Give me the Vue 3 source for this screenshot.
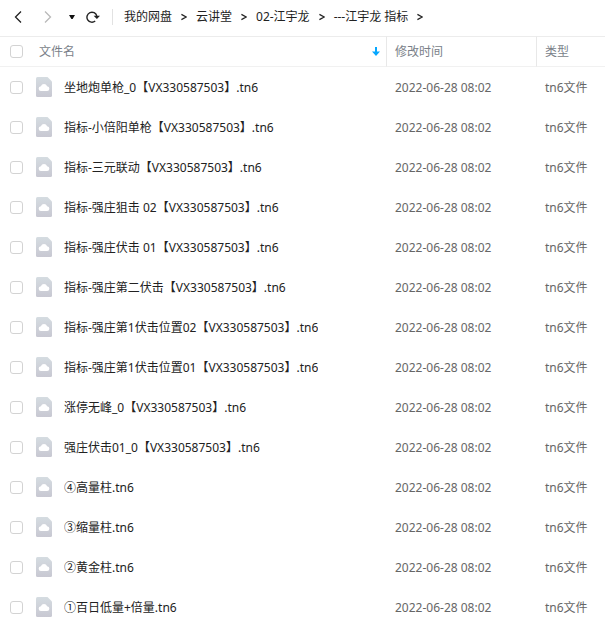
<script setup>
import { ref } from 'vue'

const crumbs = ['我的网盘', '云讲堂', '02-江宇龙', '---江宇龙 指标']

const names = [
  '坐地炮单枪_0【VX330587503】.tn6',
  '指标-小倍阳单枪【VX330587503】.tn6',
  '指标-三元联动【VX330587503】.tn6',
  '指标-强庄狙击 02【VX330587503】.tn6',
  '指标-强庄伏击 01【VX330587503】.tn6',
  '指标-强庄第二伏击【VX330587503】.tn6',
  '指标-强庄第1伏击位置02【VX330587503】.tn6',
  '指标-强庄第1伏击位置01【VX330587503】.tn6',
  '涨停无峰_0【VX330587503】.tn6',
  '强庄伏击01_0【VX330587503】.tn6',
  '④高量柱.tn6',
  '③缩量柱.tn6',
  '②黄金柱.tn6',
  '①百日低量+倍量.tn6',
]

const files = ref(
  names.map((name) => ({ name, time: '2022-06-28 08:02', type: 'tn6文件', checked: false })),
)

function toggleAll(event) {
  files.value.forEach((file) => {
    file.checked = event.target.checked
  })
}
</script>

<template>
  <main class="page">
    <header class="toolbar">
      <button class="tool back" type="button" aria-label="后退">
        <svg width="8" height="14" viewBox="0 0 8 14"><path d="M7 1.5 1.5 7 7 12.5" fill="none" stroke="#222" stroke-width="1.3" /></svg>
      </button>
      <button class="tool forward" type="button" aria-label="前进">
        <svg width="8" height="14" viewBox="0 0 8 14"><path d="M1 1.5 6.5 7 1 12.5" fill="none" stroke="#b9b9b9" stroke-width="1.3" /></svg>
      </button>
      <button class="tool history" type="button" aria-label="历史记录">
        <svg width="6" height="4" viewBox="0 0 6 4"><path d="M0 0H6L3.6 4H2.4Z" fill="#111" /></svg>
      </button>
      <button class="tool reload" type="button" aria-label="刷新">
        <svg width="14" height="12" viewBox="0 0 14 12">
          <path d="M9.2 10A5 5 0 1 1 10.8 5" fill="none" stroke="#222" stroke-width="1.4" />
          <path d="M7.6 4.7H14L10.9 8Z" fill="#222" />
        </svg>
      </button>
      <nav class="crumbs" aria-label="路径">
        <template v-for="crumb in crumbs" :key="crumb">
          <a href="#" @click.prevent>{{ crumb }}</a>
          <svg class="sep" width="6" height="8" viewBox="0 0 6 8" aria-hidden="true"><path d="M.4 1.4 5.2 4 .4 6.6" fill="none" stroke="#222" stroke-width="1.2" /></svg>
        </template>
      </nav>
    </header>

    <table class="files">
      <thead>
        <tr>
          <th>
            <div class="name-head">
              <input type="checkbox" aria-label="全选" @change="toggleAll" />
              <span class="grow">文件名</span>
              <svg width="8" height="9" viewBox="0 0 8 9"><path d="M3 0H5V4.5H8L4 9 0 4.5H3Z" fill="#06a7ff" /></svg>
            </div>
          </th>
          <th class="time">修改时间</th>
          <th class="type">类型</th>
        </tr>
      </thead>
      <tbody>
        <tr v-for="(file, i) in files" :key="file.name">
          <td>
            <div class="name-cell">
              <input :id="'file-' + i" v-model="file.checked" type="checkbox" />
              <svg class="doc" width="16" height="20" viewBox="0 0 16 20" aria-hidden="true">
                <defs>
                  <linearGradient :id="'doc-fill-' + i" x1="0" y1="0" x2="0" y2="1">
                    <stop offset="0" stop-color="#d5dce1" />
                    <stop offset="1" stop-color="#c8c8d2" />
                  </linearGradient>
                </defs>
                <path d="M1.5 0H11.5L16 4.5V18.5Q16 20 14.5 20H1.5Q0 20 0 18.5V1.5Q0 0 1.5 0Z" :fill="`url(#doc-fill-${i})`" />
                <path d="M5.2 14A2.4 2.4 0 0 1 4.9 9.2A3.3 3.3 0 0 1 11.1 9.2A2.4 2.4 0 0 1 10.8 14Z" fill="#fff" />
              </svg>
              <label :for="'file-' + i">{{ file.name }}</label>
            </div>
          </td>
          <td class="time">{{ file.time }}</td>
          <td class="type">{{ file.type }}</td>
        </tr>
      </tbody>
    </table>
  </main>
</template>

<style>
body {
  background: #fff;
}
</style>

<style scoped>
.page {
  font-family: "Noto Sans", "Noto Sans CJK SC", sans-serif;
  font-size: 12px;
  line-height: 16px;
  color: #222;
}
.toolbar {
  display: flex;
  align-items: center;
  height: 36px;
  padding: 0 0 2px 8px;
  box-sizing: border-box;
}
.tool {
  display: flex;
  align-items: center;
  justify-content: center;
  height: 32px;
  padding: 0;
  border: 0;
  background: none;
}
.back {
  width: 20px;
}
.forward {
  width: 40px;
}
.history {
  width: 8px;
}
.reload {
  width: 34px;
}
.crumbs {
  display: flex;
  align-items: center;
  gap: 9px;
  margin-left: 2px;
  padding-left: 11px;
  border-left: 1px solid #e2e2e2;
  white-space: nowrap;
}
.crumbs a {
  color: #222;
  text-decoration: none;
}
.sep {
  flex: none;
}
.files {
  width: 100%;
  table-layout: fixed;
  border-collapse: separate;
  border-spacing: 0;
}
th,
td {
  padding: 0;
  text-align: left;
  font-weight: 400;
  white-space: nowrap;
}
th {
  height: 29px;
  border-top: 1px solid #ececec;
  border-bottom: 1px solid #f1f1f1;
  color: #7a7f89;
}
td {
  height: 40px;
}
.time {
  width: 141px;
  padding-left: 8px;
  border-left: 1px solid transparent;
}
.type {
  width: 60px;
  padding-left: 8px;
  border-left: 1px solid transparent;
}
th.time,
th.type {
  border-left-color: #e8e8e8;
}
td.time,
td.type {
  height: 38px;
  padding-top: 2px;
  color: #666;
}
.name-head,
.name-cell {
  display: flex;
  align-items: center;
  padding-left: 10px;
}
.name-head {
  gap: 16px;
  padding-right: 6px;
}
.name-cell {
  gap: 13px;
}
.name-cell label {
  padding-top: 2px;
  overflow: hidden;
  text-overflow: ellipsis;
}
.doc {
  flex: none;
  margin-right: -1px;
}
.grow {
  flex: 1;
}
input {
  appearance: none;
  flex: none;
  width: 13px;
  height: 13px;
  margin: 0;
  box-sizing: border-box;
  border: 1px solid #d3d3d3;
  border-radius: 3px;
  background: #fff;
}
input:checked {
  border-color: #06a7ff;
  background: #06a7ff;
}
</style>
